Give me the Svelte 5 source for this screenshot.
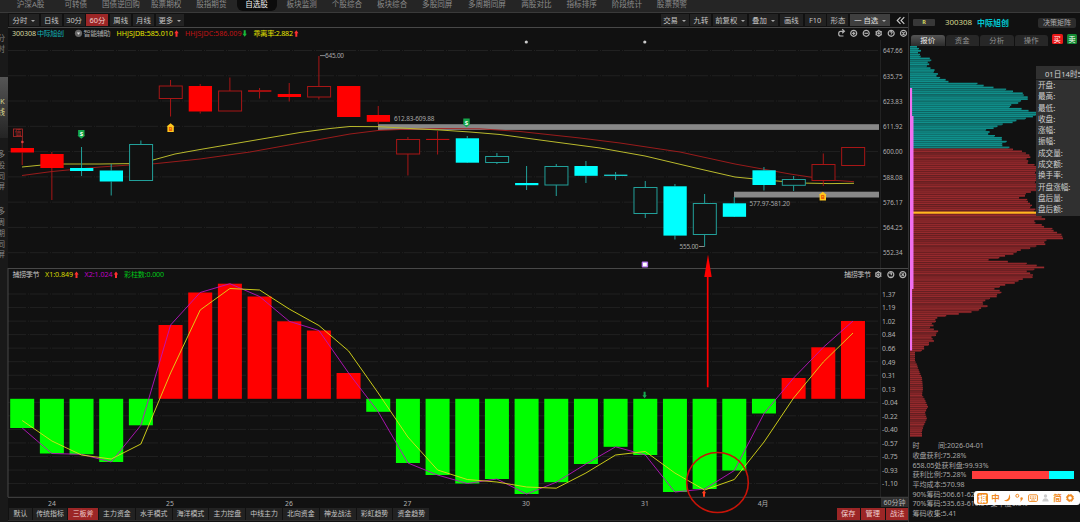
<script lang="ts">
  type Candle = [top: number, bottom: number, high: number, low: number, kind: string];

  const menus = ["沪深A股", "可转债", "国债逆回购", "股票期权", "股指期货", "自选股", "板块监测", "个股综合", "板块综合", "多股同屏", "多周期同屏", "两股对比", "指标排序", "阶段统计", "股票预警"];

  const periods = [
    { label: "分时", w: 30, more: true },
    { label: "日线", w: 21 },
    { label: "30分", w: 21 },
    { label: "60分", w: 22, active: true },
    { label: "周线", w: 21 },
    { label: "月线", w: 21 },
    { label: "更多", w: 28, more: true },
  ];

  const tools = [
    { label: "交易", w: 28, more: true },
    { label: "九转", w: 21 },
    { label: "前复权", w: 34, more: true },
    { label: "叠加", w: 29, more: true },
    { label: "画线", w: 23 },
    { label: "F10", w: 21 },
    { label: "形态", w: 21 },
    { label: "一 自选", w: 40, more: true, light: true },
  ];

  const presets = [
    ["默认", 23], ["传统指标", 34], ["三板斧", 30], ["主力资金", 35.8], ["水手模式", 35.8], ["海洋模式", 35.8],
    ["主力控盘", 35.8], ["中线主力", 35.8], ["北向资金", 35.8], ["神龙战法", 35.8], ["彩虹趋势", 35.8], ["资金趋势", 35.8],
  ] as [string, number][];

  const prices = ["647.66", "635.75", "623.83", "611.92", "600.00", "588.08", "576.17", "564.25", "552.34"];
  const levels = ["1.37", "1.19", "1.02", "0.84", "0.66", "0.49", "0.31", "0.13", "-0.04", "-0.22", "-0.40", "-0.57", "-0.75", "-0.93", "-1.10"];
  const days = [["24", 52], ["25", 170], ["26", 289], ["27", 407.5], ["30", 526], ["31", 645], ["4月", 763]] as [string, number][];

  // kind: r / c is the colour, F filled, H hollow, T thin
  const candles: Candle[] = [
    [148, 152.5, 140, 165, "rF"],
    [154, 168, 152, 200, "rF"],
    [168, 171, 147, 176, "cF"],
    [170.5, 181.5, 164, 195.5, "cF"],
    [144.5, 180.5, 140.5, 144.5, "cH"],
    [86, 98.5, 80, 116.5, "rH"],
    [86, 111.5, 84, 113.5, "rF"],
    [91, 111, 77.5, 91, "rH"],
    [90.2, 91.8, 88, 98.5, "rT"],
    [94, 97, 83, 101.5, "rF"],
    [86.5, 97, 56, 99.5, "rH"],
    [86, 117, 86, 117, "rF"],
    [115, 121.8, 106, 124, "rF"],
    [139.5, 154, 137, 175.5, "rH"],
    [138.9, 140, 131, 154.5, "rT"],
    [138.3, 162.7, 136, 162, "cF"],
    [156.5, 162.5, 153, 164, "cH"],
    [183, 185.2, 166, 190, "cF"],
    [166.5, 185, 164, 196, "cH"],
    [166, 175.8, 161, 183, "cF"],
    [174.6, 176, 172, 180, "cT"],
    [187.5, 213.5, 181, 218, "cH"],
    [186.3, 235.6, 184, 239.5, "cF"],
    [203.5, 234.5, 194, 246.5, "cH"],
    [203.3, 216.8, 197, 216, "cF"],
    [170.3, 185, 167, 190.5, "cF"],
    [179.5, 185.3, 176, 191, "cH"],
    [164.5, 180.5, 153.5, 186, "rH"],
    [147.5, 165.5, 147.5, 165.5, "rH"],
  ];

  const zero = 398.8;
  const bars = [428, 453.5, 454.3, 462, 425.3, 325, 292.5, 283.7, 296.5, 321.3, 330.5, 373, 411.8, 463, 475, 483.5, 479, 494, 482.2, 464, 446.8, 455, 492, 489, 470.5, 413.5, 378, 347.3, 321];
  const signal = [420.5, 441, 455, 459, 444, 373, 310, 288.5, 290, 309, 325.5, 351, 393, 437, 470, 479.5, 482, 487, 488.2, 473, 455, 451.5, 473, 490, 479.5, 442, 398, 362, 333];

  const cx = (i: number) => 22.2 + i * 29.67;
  const line = (values: number[]) => values.map((v, i) => `${cx(i).toFixed(1)},${v}`).join(" ");

  const maFast = "22,167 42,165 60,164 100,164 130,163.6 153,160 175,154 200,149.5 250,141 300,132.5 330,128.5 350,126.5 380,126.7 410,128.5 440,130 470,132 500,134.5 540,140 600,148 645,156 700,169 735,177 760,179.5 800,183 830,183.6 854,183.3";
  const maSlow = "22,175.5 52,171.5 100,167 130,165 155,163.7 200,159 250,152 300,143 350,134 378,130.5 400,129.5 440,128.5 480,128.8 520,131.5 580,138 620,143 680,152 735,164 790,174 830,180 854,181.7";

  // outline of the chip distribution, [y, right edge]
  const outline = [
    [46, 919], [55, 919], [57, 930], [64, 928], [68, 931], [72, 936], [78, 941], [81, 950], [83, 980], [86, 990], [90, 1012], [93, 1024], [96, 1028],
    [99, 1025], [103, 1015], [106, 1010], [109, 1025], [112, 1041], [115, 1036], [118, 1022], [122, 1010], [126, 995], [129, 987], [133, 990], [137, 1000],
    [141, 1006], [145, 1002], [148, 1012], [153, 1030], [157, 1028], [161, 1027], [165, 1037], [190, 1037], [193, 1026], [197, 1020], [200, 1030], [206, 1030],
    [208, 1034], [212, 1037], [218, 1045], [221, 1033], [225, 1042], [229, 1055], [233, 1058], [237, 1066], [240, 1045], [244, 1043], [247, 1030], [250, 1020],
    [255, 1006], [259, 990], [262, 1020], [265, 1040], [267, 1044], [271, 1024], [275, 1036], [279, 1022], [283, 1010], [287, 995], [290, 1000], [293, 999],
    [297, 994], [301, 980], [305, 987], [309, 980], [313, 960], [315, 945], [318, 936], [322, 933], [327, 932], [332, 938], [335, 934], [340, 932], [345, 927],
    [349, 923], [351, 915], [360, 915], [364, 917], [370, 919], [377, 922], [388, 923], [394, 922], [399, 925], [406, 928], [412, 925], [418, 927], [424, 924],
    [430, 922], [437, 922],
  ];

  function edge(y: number) {
    const k = Math.max(1, outline.findIndex((p) => p[0] >= y));
    const [y0, x0] = outline[k - 1];
    const [y1, x1] = outline[k];
    return x0 + ((x1 - x0) * (y - y0)) / (y1 - y0);
  }

  const chips = Array.from({ length: 202 }, (_, i) => {
    const y = 46 + i * 1.935;
    return { y, x: edge(y) + (y < 350 ? ((i * 7) % 5) - 2 : 0) };
  }).filter((c) => c.y < 436);

  const quote = ["开盘:", "最高:", "最低:", "收盘:", "涨幅:", "振幅:", "成交量:", "成交额:", "换手率:", "开盘涨幅:", "盘后量:", "盘后额:"];
</script>

{#snippet gear(x: number, y: number)}
  <g transform="translate({x} {y})" class="icon">
    <circle r="2.5" />
    <circle r="0.7" />
    <path d="M0-3.5v1M0 2.5v1M-3.1-1.8l.9.5M2.2 1.3l.9.5M-3.1 1.8l.9-.5M2.2-1.3l.9-.5" />
  </g>
{/snippet}

{#snippet round(x: number, y: number, d: string)}
  <g transform="translate({x} {y})" class="icon">
    <circle r="3" />
    <path {d} />
  </g>
{/snippet}

{#snippet arrow(x: number, y: number, color: string, down: boolean)}
  <path transform="translate({x} {y}) scale(1 {down ? -1 : 1})" d="M0-3.3L2.2-.3H1V3.2H-1V-.3H-2.2Z" fill={color} />
{/snippet}

<div class="app">
  <nav>
    {#each menus as m}
      <span class:wide={m === "多周期同屏"} class:current={m === "自选股"}>{m}</span>
    {/each}
  </nav>

  <div class="body">
    <aside class="rail">
      <div class="tab first"><i>分</i><i>时</i></div>
      <div class="tab on"><i>K</i><i>线</i></div>
      <div class="tab third"><i>多</i><i>股</i><i>同</i><i>屏</i></div>
      <div class="tab"><i>多</i><i>周</i><i>期</i><i>同</i><i>屏</i></div>
    </aside>

    <main>
      <div class="toolbar">
        <div class="group">
          {#each periods as p}
            <button class:active={p.active} style="width: {p.w}px">{p.label}{#if p.more}<b></b>{/if}</button>
          {/each}
        </div>
        <div class="group">
          {#each tools as t}
            <button class:light={t.light} style="width: {t.w}px">{t.label}{#if t.more}<b></b>{/if}</button>
          {/each}
          <svg class="fold" width="17" height="13" viewBox="0 0 17 13">
            <path d="M8.5 3.2L5.2 6.5L8.5 9.8M12.3 3.2L9 6.5L12.3 9.8" />
          </svg>
        </div>
      </div>

      <svg class="chart" width="901" height="481" viewBox="8 27 901 481">
        <g class="grid">
          {#each prices as _, i}
            <line x1="8" x2="878" y1={50.5 + i * 25.27} y2={50.5 + i * 25.27} />
          {/each}
          {#each levels as _, i}
            <line x1="8" x2="878" y1={294 + i * 13.54} y2={294 + i * 13.54} />
          {/each}
        </g>
        <line x1="880.5" x2="880.5" y1="40" y2="497" stroke="#222" />
        <g class="frame">
          <path d="M8 27.5H908M8 268.5H908M8 497.3H908M8 268V497" />
        </g>

        <g class="scale">
          {#each prices as p, i}
            <text x="883" y={53.3 + i * 25.27} textLength="19.5" lengthAdjust="spacingAndGlyphs">{p}</text>
          {/each}
          {#each levels as l, i}
            <text x="882" y={296.8 + i * 13.54}>{l}</text>
          {/each}
          {#each days as [d, x]}
            <text {x} y="506" text-anchor="middle">{d}</text>
          {/each}
        </g>

        <g class="legend">
          <text x="12" y="36.3" textLength="24" fill="#d8d8a0">300308</text>
          <text x="37" y="36.3" textLength="27" fill="#12b4bc">中际旭创</text>
          <circle cx="78.5" cy="33.3" r="3.6" fill="#666" />
          <path d="M76.8 32.6H80.2L78.5 34.8Z" fill="#ddd" />
          <text x="83.5" y="36.3" textLength="27" fill="#aaa">智能辅助</text>
          <text x="116.5" y="36.3" textLength="56.5" fill="#e4e400">HHJSJDB:585.010</text>
          {@render arrow(176.5, 33.5, "#ff3030", false)}
          <text x="185" y="36.3" textLength="56.5" fill="#c01414">HHJSJDC:586.009</text>
          {@render arrow(244.7, 33.5, "#18b838", true)}
          <text x="253.5" y="36.3" textLength="39.5" fill="#e4e400">乖离率:2.882</text>
          {@render arrow(296.3, 33.5, "#ff3030", false)}

          <text x="12.5" y="277.3" textLength="27" fill="#c4c4c4">捕捞季节</text>
          <text x="45" y="277.3" textLength="28" fill="#d8d800">X1:0.849</text>
          {@render arrow(76.5, 274.7, "#ff3030", false)}
          <text x="84.5" y="277.3" textLength="28" fill="#c000c8">X2:1.024</text>
          {@render arrow(116, 274.7, "#ff3030", false)}
          <text x="124" y="277.3" textLength="40" fill="#00c818">彩柱数:0.000</text>
          <text x="844" y="277" textLength="27" fill="#c4c4c4">捕捞季节</text>
        </g>

        <path class="icon" d="M844 31.3H840.5A1.7 2.2 0 0 0 840.5 36H843.5M842.2 29.3L844.4 31.3L842.2 33.3" />
        {@render round(853.7, 33.3, "M-1.6 0H1.6M0-1.6V1.6")}
        {@render round(866.2, 33.3, "M-1.8 0H1.8")}
        {@render gear(878.7, 33.3)}
        {@render round(891.2, 33.3, "M-1-.8C-.8-2.2 1.4-1.8 .8-.4L0 .4M0 1.3V1.9")}
        {@render round(903.5, 33.3, "M-1.2-1.2L1.2 1.2M1.2-1.2L-1.2 1.2")}
        {@render gear(878.3, 274.6)}
        {@render round(890.8, 274.6, "M-1-.8C-.8-2.2 1.4-1.8 .8-.4L0 .4M0 1.3V1.9")}
        {@render round(902.8, 274.6, "M-1.2-1.2L1.2 1.2M1.2-1.2L-1.2 1.2")}

        <!-- price gaps -->
        <rect x="378" y="124.2" width="501" height="5.7" fill="#888" />
        <rect x="734" y="191.7" width="145" height="5.8" fill="#888" />

        <polyline points={maSlow} fill="none" stroke="#a81c1c" stroke-width="0.9" />
        <polyline points={maFast} fill="none" stroke="#b9b92c" stroke-width="1" />

        {#each candles as [top, bottom, high, low, kind], i}
          {@const red = kind[0] === "r"}
          {@const dim = red ? "#a81616" : "#22a09a"}
          {@const full = kind[1] === "T" ? (red ? "#c01010" : "#18c4c4") : red ? "#ff0000" : "#00ffff"}
          <line x1={cx(i)} x2={cx(i)} y1={high} y2={top} stroke={dim} />
          <line x1={cx(i)} x2={cx(i)} y1={bottom} y2={low} stroke={dim} />
          {#if kind[1] === "H"}
            <rect x={cx(i) - 11.3} y={top} width="23" height={bottom - top} fill="#111" stroke={dim} />
          {:else}
            <rect x={cx(i) - 11.5} y={top} width="23.3" height={bottom - top} fill={full} />
          {/if}
        {/each}

        {#each bars as v, i}
          <rect x={cx(i) - 12} y={Math.min(v, zero)} width="24" height={Math.abs(v - zero)} fill={v < zero ? "#ff0000" : "#00ff00"} />
        {/each}
        <polyline points={line(bars)} fill="none" stroke="#b814c0" stroke-width="0.9" />
        <polyline points={line(signal)} fill="none" stroke="#dede18" stroke-width="0.9" />

        <g class="note">
          <path d="M320 55.6H325M699 246.5H704.5" stroke="#aaa" stroke-width="0.8" />
          <text x="325" y="58.4" textLength="19">645.00</text>
          <text x="394" y="121.3" textLength="40.5">612.83-609.88</text>
          <text x="749.5" y="206.2" textLength="40.5">577.97-581.20</text>
          <text x="679.5" y="249.2" textLength="19">555.00</text>
        </g>

        <circle cx="526.3" cy="42" r="1.6" fill="#ccc" />
        <circle cx="644.8" cy="42" r="1.6" fill="#ccc" />
        <rect x="13.5" y="129" width="9" height="7.5" fill="none" stroke="#b42828" stroke-width="0.8" />
        <text x="18" y="135.4" font-size="6.5" text-anchor="middle" fill="#b42828">值</text>
        <path d="M22.4 136.5V140.5" stroke="#b42828" stroke-width="0.8" />
        <circle cx="22.4" cy="142" r="1.3" fill="#e04040" />
        {#each [[81.3, 134], [466.5, 122.5]] as [x, y]}
          <path transform="translate({x} {y})" d="M-3.2-4H3.2V1.5H4L0 4.8L-4 1.5H-3.2Z" fill="#16a84c" />
          <text {x} y={y + 2.1} class="mark" fill="#fff">S</text>
        {/each}
        {#each [[170.6, 128], [822.8, 196.5]] as [x, y]}
          <path transform="translate({x} {y})" d="M-3.2 4H3.2V-1.5H4L0-4.8L-4-1.5H-3.2Z" fill="#ffc81e" />
          <text {x} y={y + 2.8} class="mark" fill="#e85000">B</text>
        {/each}
        <rect x="641.7" y="261.4" width="6.4" height="6.2" rx="1" fill="#b070e8" />
        <rect x="643" y="262.7" width="3.8" height="3.6" fill="#fff" />
        {@render arrow(644.6, 395, "#18a850", true)}
        {@render arrow(704, 493.5, "#ff3c1e", false)}

        <path d="M708 254.5L711.7 277H704.3Z" fill="#f00" />
        <path d="M707.7 276V387.3" stroke="#f00" stroke-width="1.7" />
        <ellipse cx="717.5" cy="482.5" rx="30.8" ry="30" class="ring" />
      </svg>

      <div class="footer">
        <span class="unit">60分钟</span>
        <div class="group">
          {#each presets as [label, w]}
            <button class:active={label === "三板斧"} style="width: {w}px">{label}</button>
          {/each}
        </div>
        <div class="group">
          {#each ["保存", "管理", "战法"] as label}
            <button class="active save">{label}</button>
          {/each}
        </div>
      </div>
    </main>

    <section class="side">
      <header>
        <span class="flag">R</span>
        <span class="code">300308</span>
        <span class="name">中际旭创</span>
        <button>决策矩阵</button>
      </header>
      <div class="tabs">
        <span class="on">报价</span><span>资金</span><span>分析</span><span>操作</span>
        <em class="buy">买</em><em class="sell">卖</em>
      </div>

      <svg class="chips" width="171" height="394" viewBox="909 46 171 394">
        {#each chips as c, i}
          <rect x="910" y={c.y} width={c.x - 910} height={i % 3 === 1 ? 1.3 : 1.7} fill={c.y < 147.6 ? "#10908c" : "#962a2d"} />
          <rect x="910" y={c.y + 1} width={c.x - 911} height="1" fill={c.y < 147.6 ? "#0f7d79" : "#782124"} opacity={i % 3 ? 0.85 : 0} />
        {/each}
        <rect x="913" y="211.6" width="123" height="2.1" fill="#ffb81e" />
        <rect x="910" y="88" width="2.1" height="262.5" fill="#f070f0" />
        <rect x="911.5" y="116" width="2" height="173" fill="#f070f0" />
      </svg>

      <div class="stats">
        <p>时<u></u>间:2026-04-01</p>
        <p>收盘获利:75.28%</p>
        <p>658.05处获利盘:99.93%</p>
        <p>获利比例:75.28% <span class="ratio"></span></p>
        <p>平均成本:570.98</p>
        <p>90%筹码:506.61-622.94</p>
        <p>70%筹码:535.63-610.51 集中度6.5%</p>
        <p>筹码收集:5.41</p>
      </div>

      <div class="quote">
        <h4>01日14时59分</h4>
        {#each quote as q}
          <p>{q}</p>
        {/each}
      </div>

      <div class="ime">
        <strong>棋</strong>
        <span>中</span>
        <svg width="9" height="10" viewBox="0 0 9 10"><path d="M6 1C6.5 5 4.5 7 1 7.3C4.5 10.3 9.5 6 6 1Z" fill="#f08a24" /></svg>
        <svg width="9" height="10" viewBox="0 0 9 10">
          <circle cx="2.3" cy="2.8" r="1.5" fill="none" stroke="#f08a24" />
          <path d="M5.3 5.3a1.3 1.3 0 1 1 1.6 1.5q0 1.6-1.7 2q.7-1 .5-1.8z" fill="#f08a24" />
        </svg>
        <svg width="10" height="10" viewBox="0 0 10 10">
          <rect x="0.6" y="1.8" width="8.8" height="6.6" rx="1" fill="none" stroke="#f08a24" />
          <path d="M2 3.9H8M2 5.3H8" stroke="#f08a24" stroke-dasharray="1 .6" />
          <path d="M3 7H7" stroke="#f08a24" stroke-width="0.8" />
        </svg>
        <svg width="9" height="10" viewBox="0 0 9 10"><circle cx="4.5" cy="3" r="1.7" fill="#ccc" /><path d="M1.3 8.5Q1.5 5.5 4.5 5.3Q7.5 5.5 7.7 8.5Z" fill="#ccc" /></svg>
        <span>简</span>
        <svg width="10" height="10" viewBox="-5 -5 10 10">
          <circle r="2.6" fill="none" stroke="#f08a24" stroke-width="1.6" />
          <circle r="3.6" fill="none" stroke="#f08a24" stroke-dasharray="1.4 1.43" />
        </svg>
      </div>
    </section>
  </div>
</div>

<style>
  :global(body) {
    background: #111;
    overflow: hidden;
  }

  .app {
    width: 1080px;
    height: 522px;
    display: flex;
    flex-direction: column;
    overflow: hidden;
    background: #111;
    color: #b4b4b4;
    font: 7.4px/1 "Noto Sans", "Noto Sans CJK SC", sans-serif;
  }

  nav {
    flex: none;
    height: 13px;
    display: flex;
    align-items: flex-start;
    padding-left: 8px;
    box-sizing: border-box;
    background: #252525;
    border-bottom: 1px solid #3a3a3a;
    color: #8c8c8c;
    font-size: 7.6px;
    line-height: 8px;
  }

  nav span {
    width: 45.2px;
    text-align: center;
    white-space: nowrap;
  }

  nav .wide {
    width: 54px;
  }

  nav .current {
    width: 40px;
    margin: 0 2.6px;
    padding-bottom: 2.5px;
    background: #0c0c0c;
    color: #f0f0f0;
    border-radius: 0 0 6px 6px;
  }

  .body {
    flex: 1;
    display: flex;
    min-height: 0;
  }

  .rail {
    width: 8px;
    flex: none;
    overflow: hidden;
    background: #191919;
    color: #858585;
    font-size: 7.5px;
  }

  .rail .tab {
    display: flex;
    flex-direction: column;
    padding-top: 14px;
  }

  .rail .first {
    height: 64px;
    padding-top: 20px;
    box-sizing: border-box;
  }

  .rail .third {
    padding-top: 11px;
  }

  .rail i {
    height: 10.8px;
    line-height: 10.8px;
    font-style: normal;
    margin-left: -2.5px;
  }

  .rail .tab.on {
    height: 61px;
    padding-top: 19px;
    box-sizing: border-box;
    background: linear-gradient(#555, #242424);
    color: #d8d890;
  }

  .rail .on i:first-child {
    margin-left: 0;
  }

  main {
    width: 901px;
    flex: none;
    display: flex;
    flex-direction: column;
  }

  button {
    margin: 0;
    padding: 0;
    border: none;
    font: inherit;
    color: #c4c4c4;
    background: #222;
    white-space: nowrap;
    text-align: center;
  }

  .toolbar {
    height: 14px;
    display: flex;
    justify-content: space-between;
    padding-left: 1px;
  }

  .group {
    display: flex;
    align-items: center;
    gap: 1.8px;
  }

  .toolbar button {
    height: 12px;
    line-height: 12px;
  }

  .toolbar b {
    display: inline-block;
    margin: 0 0 1.5px 4px;
    border: 2px solid transparent;
    border-top-color: #aaa;
    border-bottom: none;
  }

  button.active {
    background: #9c2626;
    color: #f0d0d0;
  }

  button.light {
    background: #3f3f3f;
    color: #e0e0e0;
  }

  .fold path {
    fill: none;
    stroke: #ccc;
    stroke-width: 1.1;
  }

  .chart {
    flex: none;
    overflow: visible;
    position: relative;
    z-index: 1;
  }

  .grid line {
    stroke: #212121;
    stroke-dasharray: 18 2 1 1;
  }

  .frame path {
    fill: none;
    stroke: #484848;
  }

  .scale text {
    font-size: 6.8px;
    fill: #b0b0b0;
  }

  .legend text {
    font-size: 7.1px;
  }

  .note text {
    font-size: 6.4px;
    fill: #a8a8a8;
  }

  .mark {
    font-size: 6px;
    font-weight: bold;
    text-anchor: middle;
  }

  .icon,
  .icon * {
    fill: none;
    stroke: #b0b0b0;
    stroke-width: 1.2;
  }

  .ring {
    fill: none;
    stroke: #c81408;
    stroke-width: 1.6;
  }

  .footer {
    position: relative;
    height: 12px;
    display: flex;
    justify-content: space-between;
    padding-left: 1px;
    border-bottom: 1px solid #2c2c2c;
  }

  .footer .group {
    gap: 1px;
  }

  .footer button {
    height: 11.5px;
    line-height: 11.5px;
    font-size: 6.9px;
  }

  .footer button.save {
    width: 23.5px;
    font-size: 7.2px;
  }

  .unit {
    position: absolute;
    right: 1px;
    top: -10px;
    width: 27px;
    height: 9px;
    line-height: 9px;
    background: #2e2e2e;
    text-align: center;
    font-size: 7px;
  }

  .side {
    position: relative;
    flex: 1;
    display: flex;
    flex-direction: column;
    border-left: 1px solid #333;
    margin-left: -1px;
    overflow: hidden;
  }

  .side header {
    height: 19px;
    display: flex;
    align-items: center;
    padding: 0 4px;
  }

  .flag {
    width: 22px;
    height: 7px;
    background: #383838;
    border-radius: 1px;
    color: #d8d860;
    font-size: 5.5px;
    font-weight: bold;
    line-height: 7px;
    text-align: center;
  }

  .code {
    margin-left: 10px;
    width: 32px;
    color: #d8d890;
    font-size: 7.9px;
  }

  .name {
    color: #00c8d0;
    font-size: 8px;
    font-weight: bold;
  }

  .side header button {
    margin-left: auto;
    width: 38px;
    height: 10px;
    border-radius: 2px;
    background: #2c2c2c;
    font-size: 7px;
    line-height: 10px;
    color: #b0b0b0;
  }

  .tabs {
    height: 14px;
    display: flex;
    align-items: flex-end;
    gap: 1px;
    padding-left: 2px;
  }

  .tabs span {
    width: 33.5px;
    height: 11px;
    line-height: 11px;
    text-align: center;
    border-radius: 3px 3px 0 0;
    background: #272727;
    color: #909090;
  }

  .tabs .on {
    background: linear-gradient(#555, #2c2c2c);
    color: #eee;
  }

  .tabs em {
    margin: 0 0 2px 3px;
    width: 10.6px;
    height: 10px;
    line-height: 10px;
    border-radius: 1.5px;
    text-align: center;
    font-style: normal;
    color: #fff;
  }

  .buy {
    background: #e81818;
  }

  .sell {
    background: #148a34;
  }

  .chips {
    flex: none;
  }

  .stats {
    padding: 1.2px 0 0 3.5px;
    color: #a8a8a8;
    font-size: 7.05px;
  }

  p,
  h4 {
    margin: 0;
    white-space: nowrap;
    font-weight: normal;
  }

  .stats p {
    display: flex;
    align-items: center;
    height: 9.62px;
  }

  .stats u {
    width: 18.5px;
  }

  .ratio {
    flex: none;
    width: 102.3px;
    height: 8px;
    margin-left: 5.5px;
    background: linear-gradient(90deg, #ff3c3c 75.28%, #00ffff 75.28%);
  }

  .quote {
    position: absolute;
    left: 127px;
    top: 53px;
    width: 60px;
    height: 150px;
    background: #303030;
    color: #d0d0d0;
    font-size: 7.6px;
    line-height: 11.3px;
  }

  .quote h4 {
    height: 13px;
    line-height: 16px;
    padding-left: 9px;
    border-bottom: 1px solid #1a1a1a;
    font-size: 7.6px;
  }

  .quote p {
    padding-left: 2px;
  }

  .ime {
    position: absolute;
    left: 65px;
    top: 478px;
    width: 106px;
    height: 14px;
    display: flex;
    align-items: center;
    justify-content: space-between;
    box-sizing: border-box;
    padding: 0 5px 0 3px;
    background: #fff;
    border-radius: 3px;
    color: #f08a24;
    font-size: 8.5px;
    font-weight: bold;
  }

  .ime strong {
    width: 11px;
    height: 11px;
    line-height: 11px;
    border-radius: 2px;
    background: #f08a24;
    color: #fff;
    text-align: center;
  }
</style>
